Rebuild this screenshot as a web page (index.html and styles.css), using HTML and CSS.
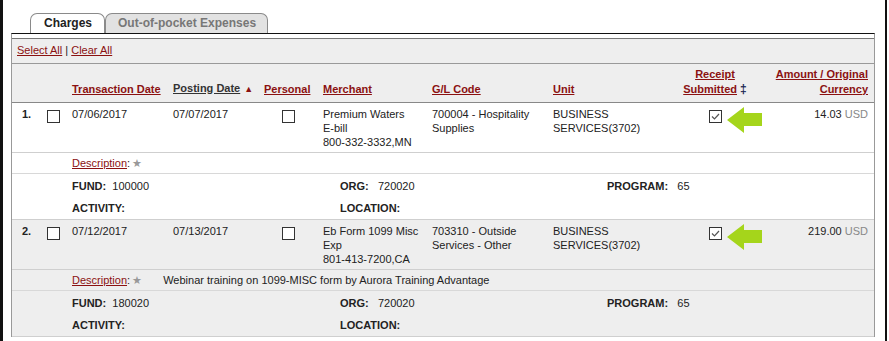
FILE: index.html
```html
<!DOCTYPE html>
<html lang="en">
<head>
    <meta charset="UTF-8">
    <title>Charges</title>
    <link rel="stylesheet" href="styles.css">
</head>
<body>
    <div class="frame">
        <div class="tabs">
            <div class="tab active">Charges</div>
            <div class="tab">Out-of-pocket Expenses</div>
        </div>

        <div class="panel">
            <div class="panel-inner">
                <div class="toolbar">
                    <a href="#">Select All</a> | <a href="#">Clear All</a>
                </div>

                <table class="charges">
                    <colgroup>
                        <col style="width:30px">
                        <col style="width:25px">
                        <col style="width:101px">
                        <col style="width:91px">
                        <col style="width:59px">
                        <col style="width:109px">
                        <col style="width:121px">
                        <col style="width:112px">
                        <col style="width:110px">
                        <col style="width:104px">
                    </colgroup>
                    <thead>
                        <tr>
                            <th></th>
                            <th></th>
                            <th><a href="#">Transaction Date</a></th>
                            <th><a href="#" class="sorted">Posting Date</a> <span class="sort">&#9650;</span></th>
                            <th><a href="#">Personal</a></th>
                            <th><a href="#">Merchant</a></th>
                            <th><a href="#">G/L Code</a></th>
                            <th><a href="#">Unit</a></th>
                            <th class="center"><a href="#">Receipt</a><br><a href="#">Submitted</a> <span class="dagger">&Dagger;</span></th>
                            <th class="right"><a href="#">Amount / Original</a><br><a href="#">Currency</a></th>
                        </tr>
                    </thead>

                    <tbody class="group">
                        <tr class="main">
                            <td class="num">1.</td>
                            <td class="chk"><span class="box"></span></td>
                            <td>07/06/2017</td>
                            <td>07/07/2017</td>
                            <td class="center"><span class="box"></span></td>
                            <td>Premium Waters<br>E-bill<br>800-332-3332,MN</td>
                            <td>700004 - Hospitality<br>Supplies</td>
                            <td>BUSINESS<br>SERVICES(3702)</td>
                            <td class="center receipt">
                                <span class="box checked"><svg viewBox="0 0 11 11" width="11" height="11"><path d="M2 5.5 L4.5 8 L9 3" fill="none" stroke="#555" stroke-width="1.2"/></svg></span>
                                <svg class="arrow" viewBox="0 0 36 26" width="36" height="26"><polygon points="0,13 17,0 17,6 35,6 35,19 17,19 17,26" fill="#a5d51b"/></svg>
                            </td>
                            <td class="right">14.03 <span class="cur">USD</span></td>
                        </tr>
                        <tr class="desc">
                            <td></td>
                            <td></td>
                            <td colspan="8"><a href="#">Description</a>: <span class="star">&#9733;</span></td>
                        </tr>
                        <tr class="fund">
                            <td></td>
                            <td></td>
                            <td colspan="8">
                                <div class="fund-grid">
                                    <div><b>FUND:</b>&nbsp; 100000</div>
                                    <div><b>ORG:</b>&nbsp;&nbsp; 720020</div>
                                    <div><b>PROGRAM:</b>&nbsp;&nbsp; 65</div>
                                    <div><b>ACTIVITY:</b></div>
                                    <div><b>LOCATION:</b></div>
                                    <div></div>
                                </div>
                            </td>
                        </tr>
                    </tbody>

                    <tbody class="group alt">
                        <tr class="main">
                            <td class="num">2.</td>
                            <td class="chk"><span class="box"></span></td>
                            <td>07/12/2017</td>
                            <td>07/13/2017</td>
                            <td class="center"><span class="box"></span></td>
                            <td>Eb Form 1099 Misc<br>Exp<br>801-413-7200,CA</td>
                            <td>703310 - Outside<br>Services - Other</td>
                            <td>BUSINESS<br>SERVICES(3702)</td>
                            <td class="center receipt">
                                <span class="box checked"><svg viewBox="0 0 11 11" width="11" height="11"><path d="M2 5.5 L4.5 8 L9 3" fill="none" stroke="#555" stroke-width="1.2"/></svg></span>
                                <svg class="arrow" viewBox="0 0 36 26" width="36" height="26"><polygon points="0,13 17,0 17,6 35,6 35,19 17,19 17,26" fill="#a5d51b"/></svg>
                            </td>
                            <td class="right">219.00 <span class="cur">USD</span></td>
                        </tr>
                        <tr class="desc">
                            <td></td>
                            <td></td>
                            <td colspan="8"><a href="#">Description</a>: <span class="star">&#9733;</span><span class="desc-text">Webinar training on 1099-MISC form by Aurora Training Advantage</span></td>
                        </tr>
                        <tr class="fund">
                            <td></td>
                            <td></td>
                            <td colspan="8">
                                <div class="fund-grid">
                                    <div><b>FUND:</b>&nbsp; 180020</div>
                                    <div><b>ORG:</b>&nbsp;&nbsp; 720020</div>
                                    <div><b>PROGRAM:</b>&nbsp;&nbsp; 65</div>
                                    <div><b>ACTIVITY:</b></div>
                                    <div><b>LOCATION:</b></div>
                                    <div></div>
                                </div>
                            </td>
                        </tr>
                    </tbody>
                </table>
            </div>
        </div>
    </div>
</body>
</html>
```

FILE: styles.css
```css
* {
    margin: 0;
    padding: 0;
    box-sizing: border-box;
}

body {
    font-family: Arial, "Liberation Sans", sans-serif;
    font-size: 11px;
    color: #222;
    background: white;
}

a {
    color: #8b1111;
    text-decoration: underline;
}

.frame {
    width: 887px;
    min-height: 341px;
    border-left: 3px solid #111;
    border-right: 2px solid #111;
    padding: 13px 10px 0 8px;
}

.tabs {
    display: flex;
    padding-left: 19px;
    height: 20px;
}

.tab {
    height: 20px;
    line-height: 19px;
    padding: 0 11px 0 12px;
    border: 1px solid #8a8a8a;
    border-bottom: none;
    border-radius: 7px 7px 0 0;
    background: #e2e2e2;
    color: #777;
    font-weight: bold;
    font-size: 12px;
    white-space: nowrap;
}

.tab.active {
    background: white;
    color: #222;
    padding: 0 12px 0 13px;
}

.panel {
    border-top: 1px solid #111;
    border-left: 1px solid #999;
    border-right: 1px solid #999;
    padding-top: 4px;
    background: white;
}

.panel-inner {
    border-top: 1px solid #777;
    background: #eeeeee;
}

.toolbar {
    height: 25px;
    line-height: 22px;
    padding-left: 5px;
    border-bottom: 1px solid #999;
}

.charges {
    width: 100%;
    table-layout: fixed;
    border-collapse: collapse;
}

.charges th {
    height: 38px;
    text-align: left;
    vertical-align: bottom;
    padding: 0 5px 5px;
    font-weight: bold;
    line-height: 15px;
    white-space: nowrap;
    border-bottom: 1px solid #888;
}

.charges th.center {
    text-align: center;
}

.charges th.right,
.charges td.right {
    text-align: right;
    padding-right: 6px;
}

.charges td.center {
    text-align: center;
}

.charges a.sorted {
    color: #333;
}

.sort {
    color: #8b1111;
    font-size: 9px;
    margin-left: 1px;
}

.dagger {
    color: #1e2a55;
    font-size: 12px;
}

.group {
    background: white;
}

.group.alt {
    background: #eeeeee;
}

.charges td {
    vertical-align: top;
    padding: 0 5px;
    line-height: 14px;
}

.main td {
    height: 50px;
    padding-top: 4px;
    border-bottom: 1px solid #cfcfcf;
}

.charges td.num {
    font-weight: bold;
    padding-left: 10px;
}

.box {
    display: inline-block;
    width: 13px;
    height: 13px;
    border: 1px solid #333;
    background: white;
    vertical-align: top;
    margin-top: 3px;
}

.box svg {
    display: block;
}

.receipt {
    position: relative;
}

.arrow {
    position: absolute;
    left: 67px;
    top: 4px;
}

.cur {
    color: #888;
}

.desc td {
    height: 21px;
    padding-top: 3px;
    border-bottom: 1px solid #d8d8d8;
}

.star {
    color: #999;
    margin-left: -1px;
}

.desc-text {
    margin-left: 21px;
}

.fund td {
    height: 46px;
    padding-top: 5px;
    border-bottom: 1px solid #cfcfcf;
}

.fund-grid {
    display: grid;
    grid-template-columns: 268px 267px 1fr;
    row-gap: 8px;
}
```
